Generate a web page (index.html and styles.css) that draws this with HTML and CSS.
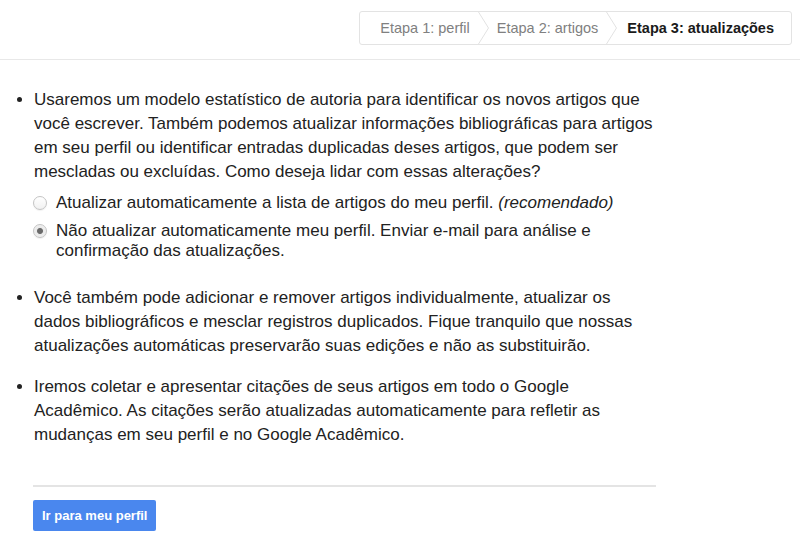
FILE: index.html
```html
<!DOCTYPE html>
<html lang="pt-BR">
<head>
    <meta charset="UTF-8">
    <meta name="viewport" content="width=device-width, initial-scale=1.0">
    <title>Atualizações do perfil</title>
    <link rel="stylesheet" href="styles.css">
</head>
<body>
    <!-- Steps header -->
    <div class="topbar">
        <nav class="steps">
            <span class="step">Etapa 1: perfil</span>
            <svg class="chevron" width="11" height="32" viewBox="0 0 11 32"><polyline points="0.5,0 10.5,16 0.5,32" fill="none" stroke="#e2e2e2" stroke-width="1"/></svg>
            <span class="step">Etapa 2: artigos</span>
            <svg class="chevron" width="11" height="32" viewBox="0 0 11 32"><polyline points="0.5,0 10.5,16 0.5,32" fill="none" stroke="#e2e2e2" stroke-width="1"/></svg>
            <span class="step current">Etapa 3: atualizações</span>
        </nav>
    </div>

    <div class="content">
        <ul class="notes">
            <li>
                Usaremos um modelo estatístico de autoria para identificar os novos artigos que você escrever. Também podemos atualizar informações bibliográficas para artigos em seu perfil ou identificar entradas duplicadas deses artigos, que podem ser mescladas ou excluídas. Como deseja lidar com essas alterações?
                <div class="options">
                    <label class="option">
                        <input type="radio" name="updates" value="auto">
                        <span>Atualizar automaticamente a lista de artigos do meu perfil. <em>(recomendado)</em></span>
                    </label>
                    <label class="option">
                        <input type="radio" name="updates" value="email" checked>
                        <span>Não atualizar automaticamente meu perfil. Enviar e-mail para análise e confirmação das atualizações.</span>
                    </label>
                </div>
            </li>
            <li>Você também pode adicionar e remover artigos individualmente, atualizar os dados bibliográficos e mesclar registros duplicados. Fique tranquilo que nossas atualizações automáticas preservarão suas edições e não as substituirão.</li>
            <li>Iremos coletar e apresentar citações de seus artigos em todo o Google Acadêmico. As citações serão atualizadas automaticamente para refletir as mudanças em seu perfil e no Google Acadêmico.</li>
        </ul>

        <div class="actions">
            <button type="button" class="primary">Ir para meu perfil</button>
        </div>
    </div>
</body>
</html>
```

FILE: styles.css
```css
body {
    font-family: Arial, "Liberation Sans", sans-serif;
    color: #222;
    background-color: #fff;
    margin: 0;
}
.topbar {
    display: flex;
    justify-content: flex-end;
    padding: 11px 8px 14px;
    border-bottom: 1px solid #e8e8e8;
}
.steps {
    display: flex;
    align-items: center;
    height: 32px;
    border: 1px solid #e3e3e3;
    border-radius: 3px;
    font-size: 14.5px;
    color: #808080;
}
.step {
    padding: 0 8px;
}
.step:first-child {
    padding-left: 20px;
}
.step.current {
    color: #1a1a1a;
    font-weight: bold;
    padding-left: 10px;
    padding-right: 17px;
}
.chevron {
    display: block;
}
.content {
    width: 623px;
    padding: 28px 0 0 33px;
}
.notes {
    margin: 0;
    padding: 0 0 0 1px;
    list-style: disc;
    font-size: 17px;
    line-height: 24px;
}
.notes li {
    margin-bottom: 17px;
}
.options {
    margin: 9px 0 0;
    padding-bottom: 8px;
}
.option {
    display: flex;
    align-items: flex-start;
    line-height: 20px;
    margin-bottom: 8px;
}
.option:last-child {
    margin-bottom: 0;
}
.option input {
    appearance: none;
    -webkit-appearance: none;
    width: 14px;
    height: 14px;
    margin: 3px 9px 0 -1px;
    flex-shrink: 0;
    border: 1px solid #c4c4c4;
    border-radius: 50%;
    background: linear-gradient(#fff, #f1f1f1);
    box-shadow: 0 1px 1px rgba(0, 0, 0, 0.06);
}
.option input:checked {
    background: radial-gradient(circle, #6a6a6a 0, #6a6a6a 2.5px, #e9e9e9 3.5px, #f7f7f7 100%);
}
.actions {
    border-top: 2px solid #e4e4e4;
    margin-top: 38px;
    padding-top: 13px;
}
.primary {
    font-family: Arial, "Liberation Sans", sans-serif;
    font-size: 13px;
    font-weight: bold;
    color: #fff;
    background: #4a87ee;
    border: none;
    border-radius: 2px;
    height: 31px;
    padding: 0 9px;
    cursor: pointer;
}
.primary:hover {
    background: #3b78e7;
}
```
